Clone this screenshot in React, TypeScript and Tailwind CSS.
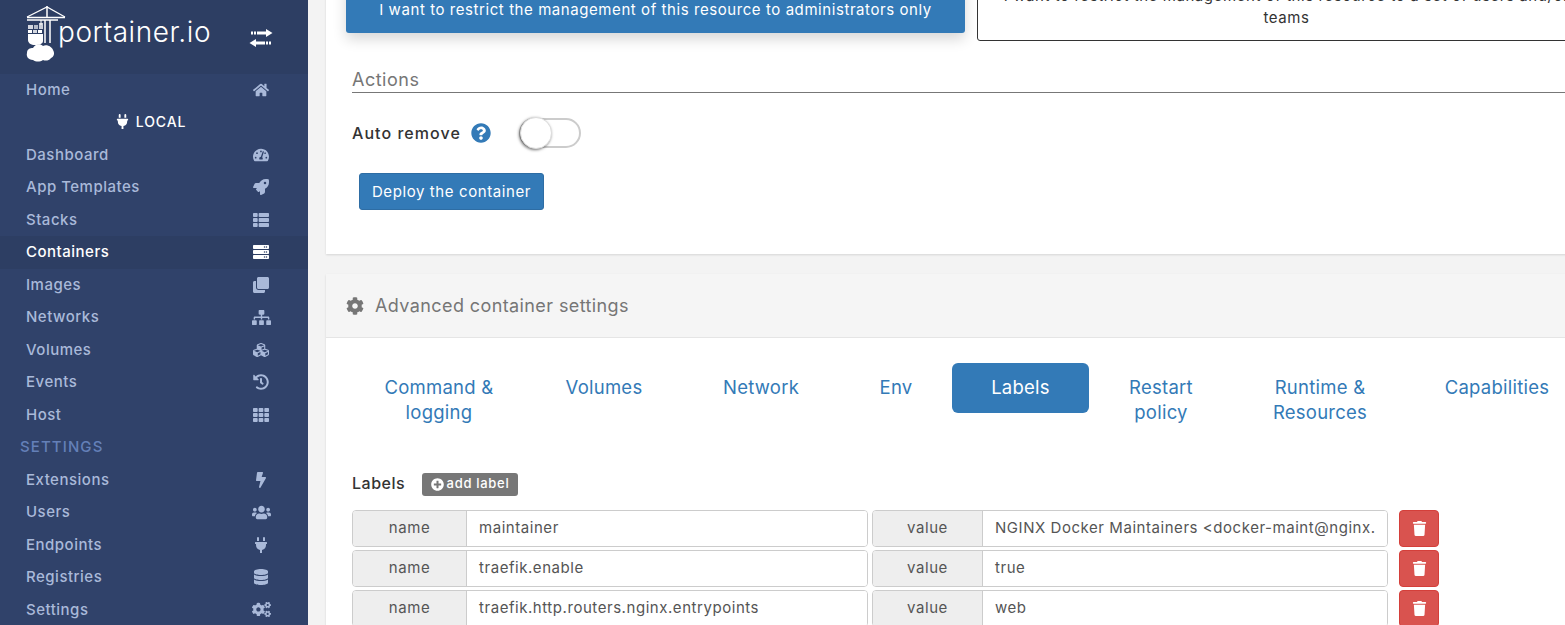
import type { ReactNode } from "react";
import {
  FaBolt,
  FaClone,
  FaCog,
  FaCogs,
  FaCubes,
  FaDatabase,
  FaHistory,
  FaHome,
  FaPlug,
  FaPlusCircle,
  FaQuestionCircle,
  FaRocket,
  FaServer,
  FaSitemap,
  FaTachometerAlt,
  FaTh,
  FaThList,
  FaTrash,
  FaUsers,
} from "react-icons/fa";

const font = "font-['Inter','Noto_Sans',sans-serif]";

function SideItem({ label, icon, active }: { label: string; icon: ReactNode; active?: boolean }) {
  return (
    <div
      className={`flex h-[32.5px] shrink-0 items-center justify-between pl-[26px] pr-[37px] text-[15px] font-medium tracking-[0.5px] ${
        active ? "bg-[#2d3e63] text-white" : "text-[#a9b9d9]"
      }`}
    >
      <span>{label}</span>
      <span className="flex w-[20px] justify-center text-[16px]">{icon}</span>
    </div>
  );
}

function Logo() {
  return (
    <svg width="42" height="56" viewBox="0 0 42 56" fill="none" className="shrink-0">
      <g stroke="#fff" fill="none">
        <path d="M1 11 L21 1 L39 11" strokeWidth="1.3" />
        <path d="M1 11.5 H39 M1 14 H32" strokeWidth="1.3" />
        <path d="M21 0 V11" strokeWidth="1.5" />
        <path d="M19 14 V37 M24 14 V37" strokeWidth="1.5" />
        <path d="M15 14 V19" strokeWidth="1" />
      </g>
      <rect x="13" y="17" width="4" height="6" fill="#fff" opacity="0.75" />
      <g fill="#fff">
        <rect x="2" y="19" width="5" height="4" opacity="0.8" />
        <rect x="8" y="19" width="4" height="4" opacity="0.65" />
        <rect x="2" y="24" width="4" height="3" />
        <rect x="7" y="24" width="4" height="3" opacity="0.8" />
        <rect x="12" y="24" width="4" height="3" />
        <path d="M2 28 H17 V35 C17 38 13 39 9 39 C5 39 2 37 2 34 Z" />
        <path d="M7 54 C2 54 0 50 1 47 C1 43 4 42 7 42 C9 38 14 37 17 40 C21 38 26 41 27 44 C29 47 28 51 25 52 C23 55 19 55 17 54 C14 56 10 56 7 54 Z" />
      </g>
    </svg>
  );
}

function SwitchIcon() {
  return (
    <svg width="24" height="18" viewBox="0 0 24 18" className="ml-auto mt-[23px] shrink-0" fill="#fff">
      <rect x="2" y="2.5" width="2" height="3" />
      <rect x="5" y="2.5" width="2" height="3" />
      <path d="M8 2.5 H17 V0 L23.5 4 L17 8 V5.5 H8 Z" />
      <path d="M16 12.5 H7 V10 L0.5 14 L7 18 V15.5 H16 Z" />
      <rect x="17" y="12.5" width="2" height="3" />
      <rect x="20" y="12.5" width="2" height="3" />
    </svg>
  );
}

function Sidebar() {
  return (
    <aside className="flex w-[308px] shrink-0 flex-col bg-[#30426a]">
      <div className="flex h-[73.5px] shrink-0 items-start bg-[#2d3e63] pl-[26px] pr-[35px] pt-[6px]">
        <Logo />
        <span className="ml-[-10px] mt-[9px] text-[28px] font-light leading-[34px] tracking-[0.55px] text-white">
          portainer.io
        </span>
        <SwitchIcon />
      </div>
      <SideItem label="Home" icon={<FaHome />} />
      <div className="flex h-[32.5px] shrink-0 items-center justify-center gap-[6px] pb-[1px] pr-[7px] text-[14px] font-medium tracking-[0.9px] text-white">
        <FaPlug className="text-[15px]" />
        LOCAL
      </div>
      <SideItem label="Dashboard" icon={<FaTachometerAlt />} />
      <SideItem label="App Templates" icon={<FaRocket />} />
      <SideItem label="Stacks" icon={<FaThList />} />
      <SideItem label="Containers" icon={<FaServer />} active />
      <SideItem label="Images" icon={<FaClone />} />
      <SideItem label="Networks" icon={<FaSitemap className="text-[19px]" />} />
      <SideItem label="Volumes" icon={<FaCubes />} />
      <SideItem label="Events" icon={<FaHistory />} />
      <SideItem label="Host" icon={<FaTh />} />
      <div className="flex h-[32.5px] shrink-0 items-center pl-[20px] text-[15px] font-medium tracking-[1.1px] text-[#6480b8]">SETTINGS</div>
      <SideItem label="Extensions" icon={<FaBolt />} />
      <SideItem label="Users" icon={<FaUsers className="text-[19px]" />} />
      <SideItem label="Endpoints" icon={<FaPlug />} />
      <SideItem label="Registries" icon={<FaDatabase />} />
      <SideItem label="Settings" icon={<FaCogs className="text-[19px]" />} />
    </aside>
  );
}

function Field({ label, value, addon }: { label: string; value: string; addon: string }) {
  return (
    <div className="flex h-[37px] w-[516px] shrink-0 overflow-hidden rounded-[4px] border border-[#ccc] text-[15px] tracking-[0.55px] text-[#555]">
      <div className={`flex shrink-0 items-center justify-center border-r border-[#ccc] bg-[#eee] pb-[1px] ${addon}`}>{label}</div>
      <div className="flex min-w-0 flex-1 items-center overflow-hidden whitespace-nowrap bg-white pb-[1px] pl-[12px]">{value}</div>
    </div>
  );
}

function LabelRow({ name, value }: { name: string; value: string }) {
  return (
    <div className="flex h-[37px]">
      <Field label="name" value={name} addon="w-[114px]" />
      <div className="ml-[4px]">
        <Field label="value" value={value} addon="w-[110px]" />
      </div>
      <button className="ml-[11px] flex w-[40px] items-center justify-center rounded-[4px] border border-[#d43f3a] bg-[#d9534f] text-[15px] text-white">
        <FaTrash />
      </button>
    </div>
  );
}

const tabs = [
  { label: ["Command &", "logging"], width: "w-[190px]" },
  { label: ["Volumes"], width: "w-[140px]" },
  { label: ["Network"], width: "w-[174px]" },
  { label: ["Env"], width: "w-[96px]" },
  { label: ["Labels"], width: "ml-[8px] w-[137px] rounded-[6px] bg-[#337ab7] text-white", active: true },
  { label: ["Restart", "policy"], width: "w-[144px]" },
  { label: ["Runtime &", "Resources"], width: "w-[174px]" },
  { label: ["Capabilities"], width: "w-[180px]" },
];

export default function App() {
  return (
    <div className={`flex h-[625px] w-[1565px] overflow-hidden bg-[#f3f3f3] ${font}`}>
      <Sidebar />
      <main className="min-w-0 flex-1 overflow-hidden pl-[18px]">
        <section className="mt-[-20px] h-[274px] w-[1300px] bg-white pl-[26px] shadow-[0_1px_2px_rgba(0,0,0,0.12)]">
          <div className="ml-[-6px] flex items-start gap-[12px]">
            <div className="h-[53px] w-[619px] shrink-0 rounded-[3px] bg-[#337ab7] pt-[19px] text-center text-[15px] leading-[22px] tracking-[0.57px] text-white shadow-[0_6px_14px_rgba(0,0,0,0.16)]">
              I want to restrict the management of this resource to administrators only
            </div>
            <div className="h-[61px] w-[619px] shrink-0 rounded-[3px] border border-[#333] bg-white px-[24px] pt-[4px] text-center text-[15px] leading-[22px] tracking-[0.57px] text-[#333]">
              I want to restrict the management of this resource to a set of users and/or teams
            </div>
          </div>
          <div className="mt-[24px] h-[28px] border-b border-[#777] text-[18px] leading-[30px] tracking-[0.5px] text-[#767676]">
            Actions
          </div>
          <div className="mt-[25px] flex h-[30px] items-center">
            <span className="w-[119px] text-[16px] font-medium tracking-[1.05px] text-[#333]">Auto remove</span>
            <FaQuestionCircle className="text-[20px] text-[#337ab7]" />
            <div className="ml-[28px] flex h-[30px] w-[62px] items-center rounded-full border-2 border-[#ccc] bg-white">
              <div className="ml-[-1px] h-[32px] w-[32px] shrink-0 rounded-full border border-[#ddd] bg-white shadow-[-1px_1px_3px_rgba(0,0,0,0.55)]" />
            </div>
          </div>
          <button className="ml-[7px] mt-[25px] block h-[37px] w-[185px] rounded-[3px] border border-[#2e6da4] bg-[#337ab7] pt-[1px] text-[15px] tracking-[0.6px] text-white">
            Deploy the container
          </button>
        </section>

        <section className="mt-[20px] w-[1300px] bg-white shadow-[0_1px_2px_rgba(0,0,0,0.12)]">
          <div className="flex h-[64px] items-center gap-[11px] border-b border-[#e5e5e5] bg-[#f5f5f5] pl-[20px] text-[18px] tracking-[0.4px] text-[#767676]">
            <FaCog className="text-[18px]" />
            Advanced container settings
          </div>
          <div className="flex pl-[18px] pt-[25px]">
            {tabs.map((t) => (
              <div
                key={t.label[0]}
                className={`flex h-[50px] shrink-0 flex-col items-center pt-[12px] text-[18.5px] leading-[25px] tracking-[0.25px] ${t.width} ${t.active ? "" : "text-[#337ab7]"}`}
              >
                {t.label.map((l) => (
                  <span key={l} className="shrink-0">{l}</span>
                ))}
              </div>
            ))}
          </div>
          <div className="mt-[60px] flex h-[23px] items-center pl-[26px]">
            <span className="mt-[-3px] w-[70px] text-[16px] font-medium tracking-[0.5px] text-[#333]">Labels</span>
            <span className="flex h-[23px] w-[96px] items-center justify-center gap-[3px] rounded-[3px] bg-[#777] pb-[1px] text-[13px] font-medium tracking-[0.7px] text-white">
              <FaPlusCircle className="text-[13px]" />
              add label
            </span>
          </div>
          <div className="mt-[14px] flex flex-col gap-[3px] pl-[26px]">
            <LabelRow name="maintainer" value="NGINX Docker Maintainers <docker-maint@nginx." />
            <LabelRow name="traefik.enable" value="true" />
            <LabelRow name="traefik.http.routers.nginx.entrypoints" value="web" />
          </div>
        </section>
      </main>
    </div>
  );
}
